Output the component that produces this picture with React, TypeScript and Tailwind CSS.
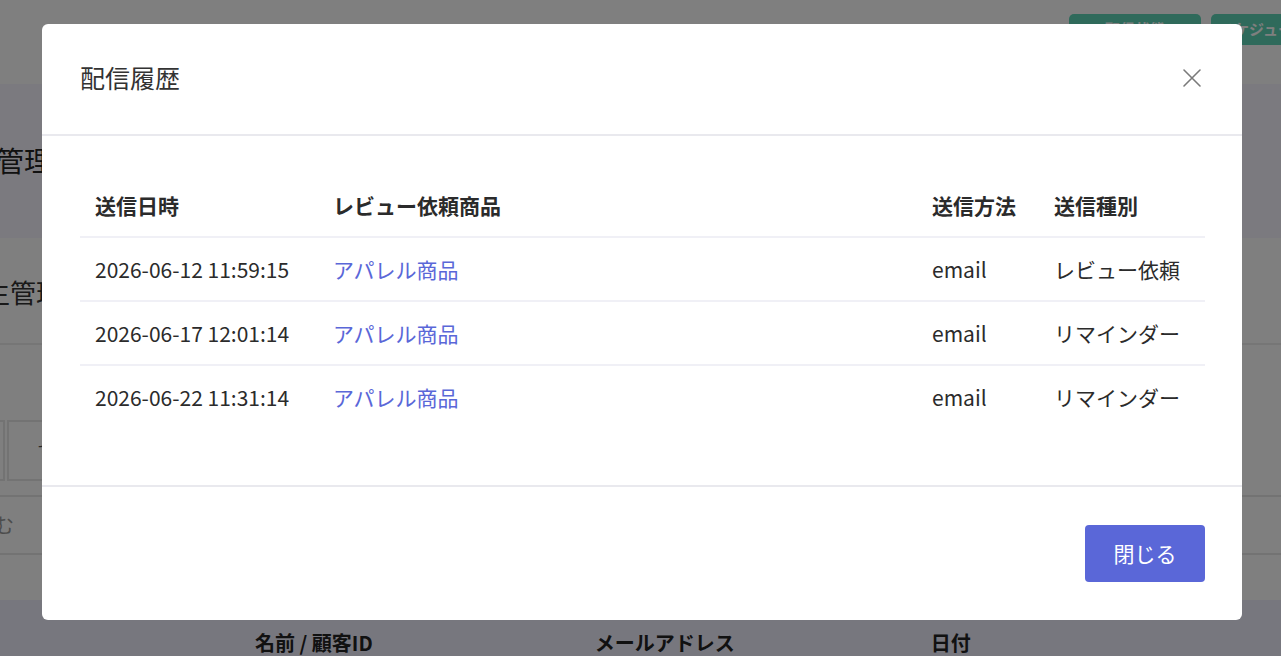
import React from 'react';

type Delivery = {
  sentAt: string;
  product: string;
  method: string;
  kind: string;
};

const deliveries: Delivery[] = [
  {sentAt: '2026-06-12 11:59:15', product: 'アパレル商品', method: 'email', kind: 'レビュー依頼'},
  {sentAt: '2026-06-17 12:01:14', product: 'アパレル商品', method: 'email', kind: 'リマインダー'},
  {sentAt: '2026-06-22 11:31:14', product: 'アパレル商品', method: 'email', kind: 'リマインダー'},
];

function CloseIcon() {
  return (
    <svg width="20" height="20" viewBox="0 0 20 20" fill="none">
      <path d="M2 2L18 18M18 2L2 18" stroke="#7a7a7a" strokeWidth="1.6" strokeLinecap="round" />
    </svg>
  );
}

// page behind the dialog
function Page() {
  return (
    <div className="w-[1281px] h-[656px] overflow-hidden bg-white">
      <div className="h-[84px] bg-white flex items-start justify-end pt-[14px] gap-[10px] overflow-hidden">
        <div className="flex items-center gap-2 text-[13px] text-[#bbb] mt-[6px] mr-[60px]">
          <span className="w-[10px] h-[10px] rounded-full bg-[#999]" />
          <span>問い合わせ</span>
        </div>
        <div className="w-[132px] h-[31px] rounded-[5px] bg-[#5ed4b6] text-white text-[15px] flex items-center justify-center font-bold">
          配信状態
        </div>
        <div className="w-[70px] h-[31px] rounded-l-[5px] bg-[#5ed4b6] text-white text-[15px] flex items-center pl-[8px] font-bold whitespace-nowrap overflow-hidden">
          スケジュール
        </div>
      </div>
      <div className="h-[154px] bg-[#f6f5fe] flex items-center">
        <h1 className="ml-[-60px] text-[28px] text-[#222] pb-[2px]">配信管理</h1>
      </div>
      <div className="h-[107px] bg-white border-b-2 border-[#ececec] flex items-center">
        <h2 className="ml-[-16px] text-[26px] text-[#333] pt-[2px]">生管理</h2>
      </div>
      <div className="h-[255px] bg-white flex flex-col">
        <div className="h-[75px]" />
        <div className="flex h-[61px]">
          <div className="w-[40px] -ml-[35px] border-2 border-[#e6e6e6]" />
          <div className="w-[200px] ml-[2px] border-2 border-[#e6e6e6] flex items-center pl-[28px] text-[18px] text-[#555]">
            すべて
          </div>
        </div>
        <div className="h-[16px] border-b-2 border-[#e6e6e6]" />
        <div className="h-[58px] border-b-2 border-[#e6e6e6] flex items-center">
          <span className="ml-[-26px] text-[20px] text-[#999]">含む</span>
        </div>
      </div>
      <div className="h-[56px] bg-[#efeefc] flex items-end pb-[0px] text-[20px] font-bold text-[#222] leading-[26px]">
        <span className="ml-[255px]">名前 / 顧客ID</span>
        <span className="ml-[222px]">メールアドレス</span>
        <span className="ml-[196px]">日付</span>
      </div>
    </div>
  );
}

export default function App() {
  return (
    <div className="relative w-[1281px] h-[656px] overflow-hidden font-['Noto_Sans_CJK_JP','Noto_Sans',sans-serif]">
      <Page />

      <div className="absolute inset-0 bg-black/50 pl-[42px] pt-[24px]">
        <div className="w-[1200px] bg-white rounded-[6px] flex flex-col">
          <div className="h-[112px] flex items-center justify-between pl-[38px] pr-[40px] border-b-2 border-[#e9e9ee]">
            <h3 className="text-[25px] text-[#333] pb-[2px]">配信履歴</h3>
            <button className="pb-[2px]">
              <CloseIcon />
            </button>
          </div>

          <div className="pl-[38px] pr-[37px] pt-[39px] pb-[58px] border-b-2 border-[#e9e9ee]">
            <table className="w-[1125px] table-fixed text-[21px] text-[#2b2b2b]">
              <colgroup>
                <col className="w-[238px]" />
                <col className="w-[599px]" />
                <col className="w-[122px]" />
                <col className="w-[166px]" />
              </colgroup>
              <thead>
                <tr className="h-[62px] border-b-2 border-[#f0f0f6] text-left">
                  <th className="pl-[15px] font-bold">送信日時</th>
                  <th className="pl-[15px] font-bold">レビュー依頼商品</th>
                  <th className="pl-[15px] font-bold">送信方法</th>
                  <th className="pl-[15px] font-bold">送信種別</th>
                </tr>
              </thead>
              <tbody>
                {deliveries.map((d, i) => (
                  <tr
                    key={d.sentAt}
                    className={i < deliveries.length - 1 ? 'h-[64px] border-b-2 border-[#f0f0f6]' : 'h-[62px]'}>
                    <td className="pl-[15px] pt-[2px]">{d.sentAt}</td>
                    <td className="pl-[15px] pt-[2px] text-[#5a67d8]">{d.product}</td>
                    <td className="pl-[15px] pt-[2px]">{d.method}</td>
                    <td className="pl-[15px] pt-[2px]">{d.kind}</td>
                  </tr>
                ))}
              </tbody>
            </table>
          </div>

          <div className="h-[133px] flex items-center justify-end pr-[37px]">
            <button className="w-[120px] h-[57px] rounded-[4px] bg-[#5a67d8] text-white text-[21px]">
              閉じる
            </button>
          </div>
        </div>
      </div>
    </div>
  );
}
